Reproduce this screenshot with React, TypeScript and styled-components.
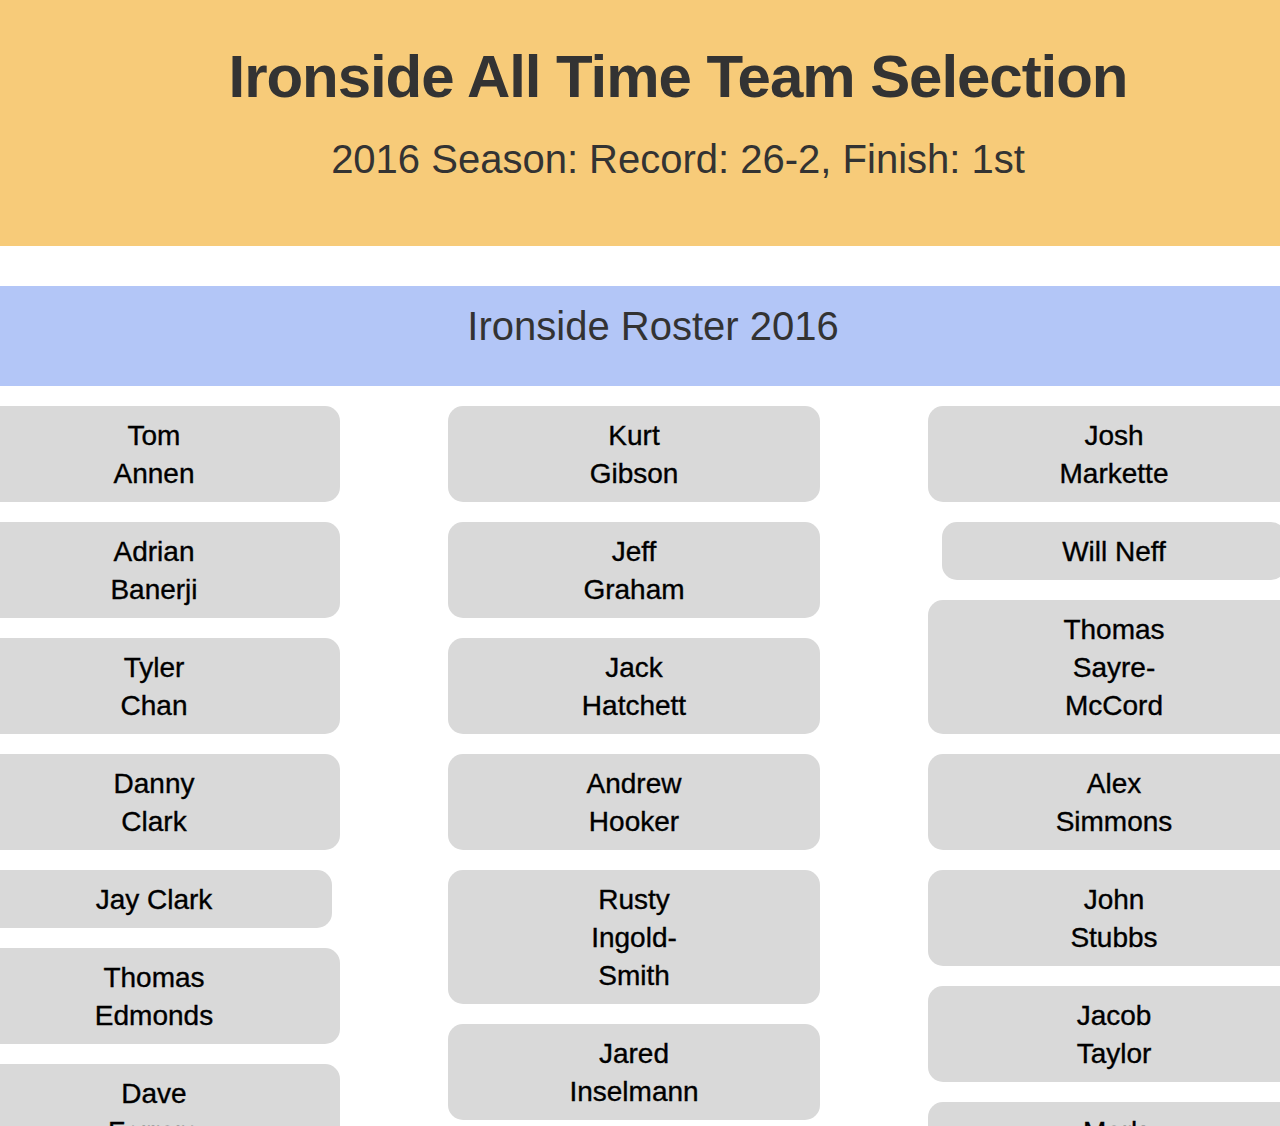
import React from "react";
import styled, { createGlobalStyle } from "styled-components";

const GlobalStyle = createGlobalStyle`
  html, body {
    margin: 0;
    padding: 0;
    overflow: hidden;
    background: #ffffff;
    font-family: "Liberation Sans", Arial, Helvetica, sans-serif;
  }
`;

const Page = styled.div`
  width: 1280px;
`;

const Header = styled.header`
  background: #f7cb79;
  padding: 42px 0 64px 76px;
  text-align: center;
  color: #333333;
`;

const Title = styled.h1`
  margin: 0;
  font-size: 60px;
  line-height: 70px;
  font-weight: 700;
  letter-spacing: -1.05px;
`;

const Subtitle = styled.h2`
  margin: 24px 0 0;
  font-size: 40px;
  line-height: 46px;
  font-weight: 400;
`;

const RosterBar = styled.section`
  margin-top: 40px;
  background: #b3c6f7;
  padding: 17px 0 37px 26px;
  text-align: center;
  color: #333333;
`;

const RosterTitle = styled.h3`
  margin: 0;
  font-size: 40px;
  line-height: 46px;
  font-weight: 400;
`;

const Columns = styled.div`
  display: grid;
  grid-template-columns: repeat(3, 480px);
  margin: 20px 0 0 -86px;
`;

const Column = styled.div`
  display: flex;
  flex-direction: column;
  align-items: center;
  gap: 20px;
`;

const PlayerButton = styled.button`
  display: block;
  width: fit-content;
  border: none;
  background: #d9d9d9;
  border-radius: 15px;
  padding: 11px 120px 9px;
  color: #000000;
  font-family: "Liberation Sans", Arial, Helvetica, sans-serif;
  font-size: 28px;
  line-height: 38px;
  text-align: center;
  -webkit-text-stroke: 0.35px #000000;
  cursor: pointer;
`;

const Name = styled.span`
  display: block;
  max-width: 132px;
`;

const columns: string[][] = [
  [
    "Tom Annen",
    "Adrian Banerji",
    "Tyler Chan",
    "Danny Clark",
    "Jay Clark",
    "Thomas Edmonds",
    "Dave Ferraro",
  ],
  [
    "Kurt Gibson",
    "Jeff Graham",
    "Jack Hatchett",
    "Andrew Hooker",
    "Rusty Ingold-Smith",
    "Jared Inselmann",
    "Mike Jones",
  ],
  [
    "Josh Markette",
    "Will Neff",
    "Thomas Sayre-McCord",
    "Alex Simmons",
    "John Stubbs",
    "Jacob Taylor",
    "Mark Walsh",
  ],
];

export default function App() {
  return (
    <Page>
      <GlobalStyle />
      <Header>
        <Title>Ironside All Time Team Selection</Title>
        <Subtitle>2016 Season: Record: 26-2, Finish: 1st</Subtitle>
      </Header>
      <RosterBar>
        <RosterTitle>Ironside Roster 2016</RosterTitle>
      </RosterBar>
      <Columns>
        {columns.map((col, i) => (
          <Column key={i}>
            {col.map((name) => (
              <PlayerButton key={name}>
                <Name>{name}</Name>
              </PlayerButton>
            ))}
          </Column>
        ))}
      </Columns>
    </Page>
  );
}
